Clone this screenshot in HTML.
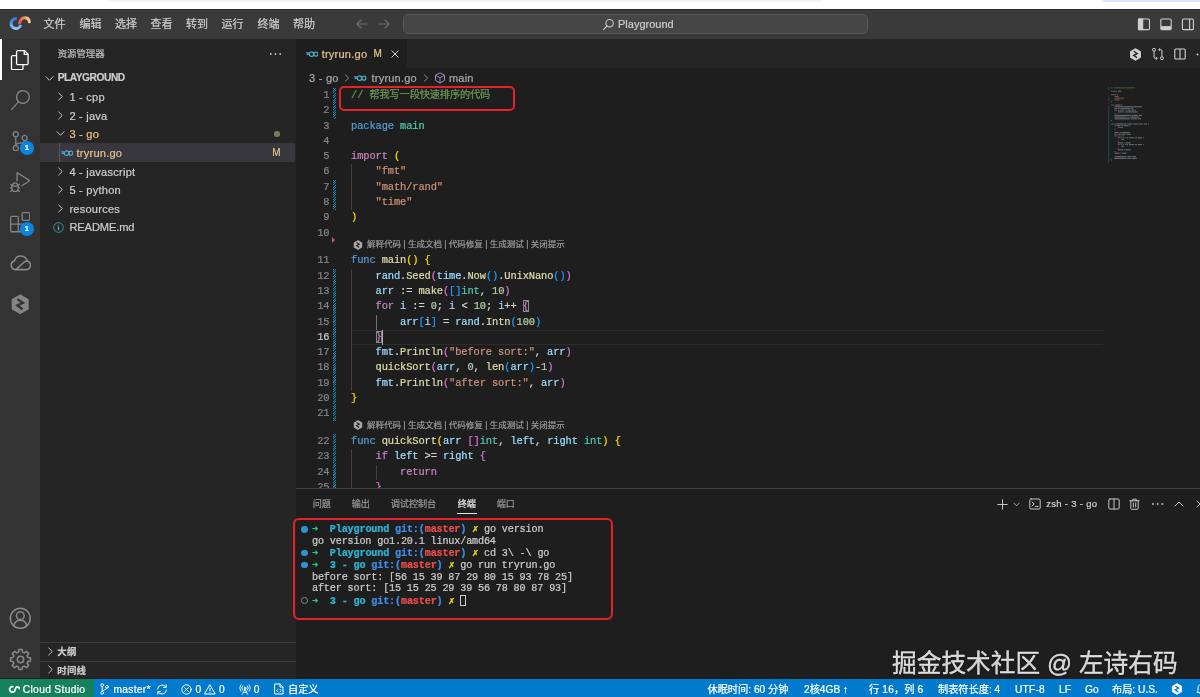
<!DOCTYPE html>
<html lang="zh-CN">
<head>
<meta charset="utf-8">
<title>Playground</title>
<style>
*{box-sizing:border-box;margin:0;padding:0}
html,body{width:1200px;height:697px;overflow:hidden;background:#1e1e1e}
body{position:relative;-webkit-text-stroke:0.22px;font-family:"Liberation Sans","Noto Sans CJK SC",sans-serif;font-size:11px;color:#cccccc;-webkit-font-smoothing:antialiased}
.abs{position:absolute}
body>div{will-change:transform}
#top{left:0;top:0;width:1200px;height:9px;background:#ffffff}
#top .g{left:108px;top:0;width:714px;height:2px;background:linear-gradient(#f1f1f1,#f8f8f8);border-radius:0 0 3px 3px}
#top .b{left:1102px;top:0;width:98px;height:2.4px;background:#dbe5fb;border-radius:0 0 0 3px}
#title{left:0;top:9px;width:1200px;height:30px;background:#3a3a3a;box-shadow:inset 0 1px 0 #2b2b2b}
#title .menu{top:0;height:30px;line-height:31.4px;margin-left:0.5px;font-size:11px;color:#cccccc;white-space:nowrap}
#cc{left:403px;top:5.2px;width:465px;height:20.3px;border:1px solid #5a5a5a;border-radius:5px;background:#464646}
#cc span{left:214px;top:0;line-height:18.6px;font-size:11px;color:#cccccc}
#act{left:0;top:39px;width:40px;height:639.3px;background:#333333}
#act .sel{left:0;top:0;width:2.3px;height:40.7px;background:#ffffff}
#side{z-index:1;left:40px;top:39px;width:256px;height:639.3px;background:#252526}
#side .hd{left:17.7px;top:0;height:29.7px;line-height:30px;font-size:9.4px;color:#bbbbbb}
.row{position:absolute;left:0.7px;width:254.3px;height:18.65px;line-height:18.65px;font-size:11.1px;letter-spacing:0.22px;color:#cccccc;white-space:nowrap}
.row .tx{position:absolute;top:0.6px}
.row svg{position:absolute}
.mod{color:#e2c08d}
#edit{left:295px;top:39px;width:905px;height:639.3px;background:#1e1e1e}
#tabs{left:0;top:0;width:905px;height:28.8px;background:#252526}
#tab1{left:0;top:0;width:111.7px;height:28.8px;background:#1e1e1e}
#bc{left:0;top:29.6px;width:905px;height:18.6px;line-height:18.6px;font-size:11px;color:#a9a9a9;white-space:nowrap}
#code{left:0;top:49.2px;width:905px;height:399.6px;overflow:hidden;font-family:"Liberation Mono","Noto Sans CJK SC",monospace;font-size:10.4px;letter-spacing:-0.11px}
.ln{position:absolute;left:0;width:34.5px;text-align:right;color:#858585;height:15.26px;line-height:15.26px}
.cl{position:absolute;left:56px;height:15.26px;line-height:15.26px;white-space:pre;color:#d4d4d4}
.lens{position:absolute;left:57px;margin-top:-2.4px;height:12.7px;line-height:12.7px;font-family:"Liberation Sans","Noto Sans CJK SC",sans-serif;font-size:8.5px;color:#999999;white-space:nowrap;letter-spacing:0}
.k{color:#569cd6}.c{color:#c586c0}.f{color:#dcdcaa}.v{color:#9cdcfe}.t{color:#4ec9b0}.s{color:#ce9178}.n{color:#b5cea8}.m{color:#6a9955}
.b1{color:#ffd700}.b2{color:#da70d6}.b3{color:#179fff}
.bm{outline:1px solid #888888;outline-offset:-1px;background:rgba(0,100,0,0.1)}
.gut{position:absolute;left:38px;width:3px;background:repeating-linear-gradient(135deg,#1b81a8 0,#1b81a8 0.8px,rgba(27,129,168,0.15) 0.8px,rgba(27,129,168,0.15) 1.7px)}
.ig{position:absolute;width:1px;background:#3a3a3a}
#panel{left:0;top:448.8px;width:905px;height:189.8px;background:#1e1e1e;border-top:1px solid #424242}
#panel .pt{top:5.4px;margin-left:0.7px;height:20px;line-height:20px;font-size:9.1px;color:#969696;white-space:nowrap}
#term{left:0;top:0.7px;font-family:"Liberation Mono",monospace;font-size:10.17px;letter-spacing:-0.166px;color:#cccccc;white-space:pre}
#term div{position:absolute;left:17px;height:11.87px;line-height:11.87px}
#term b{font-weight:bold}
.tg{color:#23d18b}.tc{color:#29b8db}.tb{color:#3b8eea}.tr{color:#f14c4c}.ty{color:#e5e510}
.dot{position:absolute;width:6.8px;height:6.8px;border-radius:50%;margin:-0.5px 0 0 0.7px}
.red{z-index:3;position:absolute;border:2px solid #e8202a;border-radius:5px}
#status{z-index:2;left:0;top:679px;width:1200px;height:18px;background:#007acc;color:#ffffff;font-size:10.2px;line-height:21.4px;white-space:nowrap}
#status .rm{left:0;top:0;width:93.8px;height:18px;background:#16825d}
#status span{position:absolute;top:0}
#status svg{margin-top:0.9px}
#wm{z-index:2;left:892.4px;top:648.8px;font-size:24.7px;line-height:30px;color:rgba(255,255,255,0.82);-webkit-text-stroke:0.3px;white-space:nowrap;text-shadow:0 0 2px rgba(0,0,0,0.35)}
</style>
</head>
<body>
<div id="top" class="abs"><div class="g abs"></div><div class="b abs"></div></div>

<div id="title" class="abs">
  <svg class="abs" style="left:8px;top:5.300px" width="24" height="17" viewBox="0 0 24 17" fill="none" stroke-width="3">
    <defs><linearGradient id="lgb" x1="0" y1="0" x2="0" y2="1"><stop offset="0" stop-color="#3677dc"/><stop offset="0.55" stop-color="#5f9ff0"/><stop offset="1" stop-color="#93c6f8"/></linearGradient>
    <linearGradient id="lgo" x1="0" y1="0" x2="1" y2="0"><stop offset="0" stop-color="#e25a4c"/><stop offset="0.45" stop-color="#ee8e62"/><stop offset="1" stop-color="#f8cf8e"/></linearGradient></defs>
    <path d="M8.85 4.67A4.9 4.9 0 1 0 12.73 10.77" stroke="url(#lgb)"/>
    <path d="M11.6 9C12.4 5.6 14 3.7 16.6 3.7C19.2 3.7 21 5.200 21.300 7.800" stroke="url(#lgo)" stroke-linecap="round"/>
  </svg>
  <span class="menu abs" style="left:43px">文件</span>
  <span class="menu abs" style="left:79px">编辑</span>
  <span class="menu abs" style="left:114.5px">选择</span>
  <span class="menu abs" style="left:150px">查看</span>
  <span class="menu abs" style="left:185.5px">转到</span>
  <span class="menu abs" style="left:221px">运行</span>
  <span class="menu abs" style="left:257px">终端</span>
  <span class="menu abs" style="left:292.5px">帮助</span>
  <svg class="abs" style="left:355px;top:9px" width="36" height="12" viewBox="0 0 36 12" fill="none" stroke="#6e6e6e" stroke-width="1.1" stroke-linecap="round" stroke-linejoin="round">
    <path d="M2 6H12M6 2L2 6L6 10"/><path d="M24 6H34M30 2L34 6L30 10"/>
  </svg>
  <div id="cc" class="abs">
    <svg class="abs" style="left:198px;top:2.800px" width="13" height="13" viewBox="0 0 13 13" fill="none" stroke="#cccccc" stroke-width="1.1" stroke-linecap="round"><circle cx="7.6" cy="5.2" r="3.7"/><path d="M5 8L1.4 11.6"/></svg>
    <span class="abs">Playground</span>
  </div>
  <svg class="abs" style="left:1137px;top:8.500px" width="62" height="13" viewBox="0 0 62 13" fill="none" stroke="#d0d0d0" stroke-width="1.100">
    <rect x="1.500" y="1" width="11" height="10.600" rx="1.200"/><rect x="1.500" y="1" width="4.200" height="10.600" fill="#d0d0d0"/>
    <rect x="23.800" y="1" width="10.400" height="10.600" rx="1.200"/><rect x="24.300" y="8.600" width="9.400" height="2.600" fill="#d0d0d0" stroke-width="0.800"/>
    <rect x="45.400" y="1" width="11" height="10.600" rx="1.200"/><path d="M52.600 1V11.600"/>
  </svg>
</div>

<div id="act" class="abs">
  <div class="sel abs"></div>
  <svg class="abs" style="left:10.1px;top:10.8px" width="20.4" height="20.4" viewBox="0 0 24 24" fill="#ffffff"><path d="M17.5 0h-9L7 1.5V6H2.5L1 7.5v15.07L2.5 24h12.07L16 22.57V18h4.7l1.3-1.43V4.5L17.5 0zm0 2.12l2.38 2.38H17.5V2.12zm-3 20.38h-12v-15H7v9.07L8.5 18h6v4.5zm6-6h-12v-15H16V6h4.5v10.5z"/></svg>
<svg class="abs" style="left:10.1px;top:51.3px" width="20.4" height="20.4" viewBox="0 0 24 24" fill="#858585"><path d="M15.25 0a8.25 8.25 0 0 0-6.18 13.72L1 22.88l1.12 1 8.05-9.12A8.251 8.251 0 1 0 15.25.01V0zm0 15a6.75 6.75 0 1 1 0-13.5 6.75 6.75 0 0 1 0 13.5z"/></svg>
<svg class="abs" style="left:10.1px;top:91.8px" width="20.4" height="20.4" viewBox="0 0 24 24" fill="#858585"><path d="M21.007 8.222A3.738 3.738 0 0 0 15.045 5.2a3.737 3.737 0 0 0 1.156 6.583 2.988 2.988 0 0 1-2.668 1.67h-2.99a4.456 4.456 0 0 0-2.989 1.165V7.4a3.737 3.737 0 1 0-1.494 0v9.117a3.776 3.776 0 1 0 1.816.099 2.99 2.99 0 0 1 2.668-1.667h2.99a4.484 4.484 0 0 0 4.223-3.039 3.736 3.736 0 0 0 3.25-3.687zM4.565 3.738a2.242 2.242 0 1 1 4.484 0 2.242 2.242 0 0 1-4.484 0zm4.484 16.441a2.242 2.242 0 1 1-4.484 0 2.242 2.242 0 0 1 4.484 0zm8.221-9.715a2.242 2.242 0 1 1 0-4.485 2.242 2.242 0 0 1 0 4.485z"/></svg>
<svg class="abs" style="left:10.1px;top:132.8px" width="20.4" height="20.4" viewBox="0 0 24 24" fill="#858585"><path d="M10.94 13.5l-1.32 1.32a3.73 3.73 0 0 0-7.24 0L1.06 13.5 0 14.56l1.72 1.72-.22.22V18H0v1.5h1.5v.08c.077.489.214.966.41 1.42L0 22.94 1.06 24l1.65-1.65A4.308 4.308 0 0 0 6 24a4.31 4.31 0 0 0 3.29-1.65L10.94 24 12 22.94 10.09 21c.198-.464.336-.951.41-1.45v-.1H12V18h-1.500v-1.5l-.22-.22L12 14.56l-1.06-1.06zM6 13.5a2.25 2.25 0 0 1 2.25 2.25h-4.5A2.25 2.25 0 0 1 6 13.5zm3 6a3.33 3.33 0 0 1-3 3 3.33 3.33 0 0 1-3-3v-2.250h6v2.250zm14.76-9.9v1.26L13.5 17.37V15.6l8.5-5.37L9 2v9.46a5.07 5.07 0 0 0-1.5-.72V.63L8.640 0l15.120 9.600z"/></svg>
<svg class="abs" style="left:10.1px;top:173.3px" width="20.4" height="20.4" viewBox="0 0 24 24" fill="#858585"><path d="M13.5 1.5L15 0h7.5L24 1.5V9l-1.5 1.5H15L13.5 9V1.5zm1.5 0V9h7.5V1.5H15zM0 15V6l1.5-1.5H9L10.5 6v7.5H18l1.5 1.5v7.5L18 24H1.5L0 22.500V15zm9-1.5V6H1.5v7.5H9zM9 15H1.5v7.5H9V15zm1.500 7.500H18V15h-7.500v7.500z"/></svg>
<svg class="abs" style="left:9.600px;top:213.300px" width="21.600" height="21.600" viewBox="0 0 24 24" fill="none"><g fill="none" stroke="#8a8a8a" stroke-width="1.700" stroke-linecap="round" stroke-linejoin="round"><path d="M6.300 19.600H17.800a4.900 4.900 0 0 0 1.300-9.620A7.300 7.300 0 0 0 5.050 9.700A5.050 5.050 0 0 0 6.300 19.600z"/><path d="M6.900 19.300L15.200 11.700C16.400 10.600 17.600 10.100 19 10"/></g></svg>
<svg class="abs" style="left:10.1px;top:255.3px" width="20.4" height="20.4" viewBox="0 0 24 24" fill="#858585"><path d="M12 1.2l9.2 5.3v11L12 22.800 2.800 17.500v-11z" stroke="#858585" stroke-width="1.6" stroke-linejoin="round"/><path d="M8.600 6L15.200 10.300L8.600 13.500L14.800 18" fill="none" stroke="#333333" stroke-width="2.700" stroke-linejoin="miter"/></svg>
<svg class="abs" style="left:9px;top:568.200px" width="22.600" height="22.600" viewBox="0 0 24 24" fill="none"><g fill="none" stroke="#8a8a8a" stroke-width="1.600"><circle cx="12" cy="12" r="10.6"/><circle cx="12" cy="9.200" r="4.100"/><path d="M5.200 19.800c.8-3.600 3.500-5.600 6.800-5.600s6 2 6.800 5.600"/></g></svg>
<svg class="abs" style="left:8.800px;top:608.500px" width="23" height="23" viewBox="0 0 24 24" fill="none"><g fill="none" stroke="#8a8a8a" stroke-width="1.600" stroke-linejoin="round"><path d="M19.73 9.95L22.36 10.28L22.36 13.72L19.73 14.05L18.92 16.02L20.54 18.10L18.10 20.54L16.02 18.92L14.05 19.73L13.72 22.36L10.28 22.36L9.95 19.73L7.98 18.92L5.90 20.54L3.46 18.10L5.08 16.02L4.27 14.05L1.64 13.72L1.64 10.28L4.27 9.95L5.08 7.98L3.46 5.90L5.90 3.46L7.98 5.08L9.95 4.27L10.28 1.64L13.72 1.64L14.05 4.27L16.02 5.08L18.10 3.46L20.54 5.90L18.92 7.98Z"/><circle cx="12" cy="12" r="3.300"/></g></svg>
<div class="abs" style="left:20.2px;top:102.2px;width:13.6px;height:13.6px;border-radius:50%;background:#0a84e0;color:#fff;font-size:7.6px;font-weight:bold;line-height:13.6px;text-align:center">1</div>
<div class="abs" style="left:20.2px;top:183.2px;width:13.6px;height:13.6px;border-radius:50%;background:#0a84e0;color:#fff;font-size:7.6px;font-weight:bold;line-height:13.6px;text-align:center">1</div>

</div>

<div id="side" class="abs">
  <div class="hd abs">资源管理器</div>
  <div class="row" style="top:29.70px"><svg style="left:4.300px;top:5.500px" width="9" height="9" viewBox="0 0 9 9" fill="none" stroke="#c5c5c5" stroke-width="1" stroke-linecap="round" stroke-linejoin="round"><path d="M1 2.700L4.500 6.300L8 2.700"/></svg><span class="tx" style="left:17px;top:0;font-weight:bold;font-size:10.200px;color:#cccccc;letter-spacing:-0.450px">PLAYGROUND</span></div>
<div class="row" style="top:48.35px;"><svg style="left:14.900px;top:4.800px" width="9" height="9" viewBox="0 0 9 9" fill="none" stroke="#c5c5c5" stroke-width="1" stroke-linecap="round" stroke-linejoin="round"><path d="M2.700 1L6.300 4.500L2.700 8"/></svg><span class="tx" style="left:28.7px">1 - cpp</span></div>
<div class="row" style="top:67.00px;"><svg style="left:14.900px;top:4.800px" width="9" height="9" viewBox="0 0 9 9" fill="none" stroke="#c5c5c5" stroke-width="1" stroke-linecap="round" stroke-linejoin="round"><path d="M2.700 1L6.300 4.500L2.700 8"/></svg><span class="tx" style="left:28.7px">2 - java</span></div>
<div class="row" style="top:85.65px;"><svg style="left:14.900px;top:4.800px" width="9" height="9" viewBox="0 0 9 9" fill="none" stroke="#c5c5c5" stroke-width="1" stroke-linecap="round" stroke-linejoin="round"><path d="M1 2.700L4.500 6.300L8 2.700"/></svg><span class="tx mod" style="left:28.7px">3 - go</span><span style="position:absolute;left:233.500px;top:6.600px;width:5.400px;height:5.400px;border-radius:50%;background:#7d7a57"></span></div>
<div class="row" style="top:104.30px;background:#37373d;box-shadow:-1px 0 0 #37373d"><svg style="left:20px;top:5.400px" width="12.500" height="7.800" viewBox="0 0 24 15" fill="none" stroke="#4fa8c8" stroke-width="2.400" stroke-linecap="round"><circle cx="10.500" cy="8" r="4.200"/><circle cx="19" cy="8" r="3.800"/><path d="M1 5.500H5M2.500 8.500H5"/></svg><span class="tx mod" style="left:35.8px">tryrun.go</span><span class="tx" style="left:231.600px;color:#e2c08d;font-size:10px;letter-spacing:0">M</span><span style="position:absolute;left:18.400px;top:0;width:1px;height:18.650px;background:#585858"></span></div>
<div class="row" style="top:122.95px;"><svg style="left:14.900px;top:4.800px" width="9" height="9" viewBox="0 0 9 9" fill="none" stroke="#c5c5c5" stroke-width="1" stroke-linecap="round" stroke-linejoin="round"><path d="M2.700 1L6.300 4.500L2.700 8"/></svg><span class="tx" style="left:28.7px">4 - javascript</span></div>
<div class="row" style="top:141.60px;"><svg style="left:14.900px;top:4.800px" width="9" height="9" viewBox="0 0 9 9" fill="none" stroke="#c5c5c5" stroke-width="1" stroke-linecap="round" stroke-linejoin="round"><path d="M2.700 1L6.300 4.500L2.700 8"/></svg><span class="tx" style="left:28.7px">5 - python</span></div>
<div class="row" style="top:160.25px;"><svg style="left:14.900px;top:4.800px" width="9" height="9" viewBox="0 0 9 9" fill="none" stroke="#c5c5c5" stroke-width="1" stroke-linecap="round" stroke-linejoin="round"><path d="M2.700 1L6.300 4.500L2.700 8"/></svg><span class="tx" style="left:28.7px">resources</span></div>
<div class="row" style="top:178.90px;"><svg style="left:12.500px;top:4px" width="11" height="11" viewBox="0 0 11 11"><circle cx="5.500" cy="5.500" r="4.800" fill="none" stroke="#3794a8" stroke-width="1"/><path d="M5.500 4.600V8.200M5.500 2.700V3.500" stroke="#4bb2c8" stroke-width="1.300"/></svg><span class="tx" style="left:28.7px;letter-spacing:-0.100px">README.md</span></div>
<svg class="abs" style="left:229.300px;top:13px" width="13" height="4" viewBox="0 0 13 4" fill="#c5c5c5"><circle cx="1.800" cy="2" r="0.900"/><circle cx="6.500" cy="2" r="0.900"/><circle cx="11.200" cy="2" r="0.900"/></svg>
<div class="row" style="top:602.600px;left:0;width:256px;border-top:1px solid #3c3c3c;height:19.400px;line-height:17.600px"><svg style="left:5.500px;top:4.200px" width="9" height="9" viewBox="0 0 9 9" fill="none" stroke="#c5c5c5" stroke-width="1" stroke-linecap="round" stroke-linejoin="round"><path d="M2.700 1L6.300 4.500L2.700 8"/></svg><span class="tx" style="left:17.300px;top:0;font-weight:bold;font-size:9.400px">大纲</span></div>
<div class="row" style="top:622px;left:0;width:256px;border-top:1px solid #3c3c3c;height:17.300px;line-height:17.960px"><svg style="left:5.500px;top:3.450px" width="9" height="9" viewBox="0 0 9 9" fill="none" stroke="#c5c5c5" stroke-width="1" stroke-linecap="round" stroke-linejoin="round"><path d="M2.700 1L6.300 4.500L2.700 8"/></svg><span class="tx" style="left:17.300px;top:0;font-weight:bold;font-size:9.400px">时间线</span></div>

</div>

<div id="edit" class="abs">
  <div id="tabs" class="abs">
    <div id="tab1" class="abs"></div>
    <svg class="abs" style="left:10.5px;top:11.0px" width="12.5" height="7.8" viewBox="0 0 24 15" fill="none" stroke="#4fa8c8" stroke-width="2.400" stroke-linecap="round"><circle cx="10.500" cy="8" r="4.200"/><circle cx="19" cy="8" r="3.800"/><path d="M1 5.500H5M2.500 8.500H5"/></svg><span class="abs" style="left:26.700px;top:0;line-height:30.500px;font-size:11.100px;letter-spacing:0.200px;color:#e2c08d;white-space:nowrap">tryrun.go</span><span class="abs" style="left:78.600px;top:0;line-height:30.500px;font-size:10px;color:#e2c08d">M</span><svg class="abs" style="left:95.500px;top:11px" width="8" height="8" viewBox="0 0 8 8" stroke="#d0d0d0" stroke-width="1" stroke-linecap="round"><path d="M0.800 0.800L7.200 7.200M7.200 0.800L0.800 7.200"/></svg><svg class="abs" style="left:833.500px;top:8.500px" width="13" height="13" viewBox="0 0 24 24"><path d="M12 1.200l9.200 5.300v11L12 22.800 2.800 17.500v-11z" fill="#d4d4d4" stroke="#d4d4d4" stroke-width="1.600" stroke-linejoin="round"/><path d="M8.600 6L15.200 10.300L8.600 13.500L14.800 18" fill="none" stroke="#252526" stroke-width="2.700" stroke-linejoin="miter"/></svg><svg class="abs" style="left:856px;top:8px" width="14" height="14" viewBox="0 0 16 16" fill="none" stroke="#d4d4d4" stroke-width="1.100"><circle cx="3.500" cy="3.200" r="1.700"/><circle cx="12.500" cy="12.800" r="1.700"/><path d="M3.500 5V11.500a1.500 1.500 0 0 0 1.500 1.500H7M5.500 11.500L7.200 13L5.500 14.500M12.500 11V4.500a1.500 1.500 0 0 0-1.500-1.500H9M10.500 1.500L8.800 3L10.500 4.500"/></svg><svg class="abs" style="left:879px;top:8.500px" width="12" height="12" viewBox="0 0 12 12" fill="none" stroke="#d4d4d4" stroke-width="1.100"><rect x="0.800" y="1" width="10.400" height="10" rx="1"/><path d="M6 1V11"/></svg><svg class="abs" style="left:901px;top:13.500px" width="4" height="3" viewBox="0 0 4 3" fill="#d4d4d4"><circle cx="1.500" cy="1.500" r="0.900"/></svg>
  </div>
  <div id="bc" class="abs"><span class="abs" style="left:14px;letter-spacing:0.250px">3 - go</span><svg class="abs" style="left:47.5px;top:5.300px" width="8" height="8" viewBox="0 0 9 9" fill="none" stroke="#a0a0a0" stroke-width="1" stroke-linecap="round" stroke-linejoin="round"><path d="M2.700 1L6.300 4.500L2.700 8"/></svg><svg class="abs" style="left:59.0px;top:5.6px" width="12.5" height="7.8" viewBox="0 0 24 15" fill="none" stroke="#4fa8c8" stroke-width="2.400" stroke-linecap="round"><circle cx="10.500" cy="8" r="4.200"/><circle cx="19" cy="8" r="3.800"/><path d="M1 5.500H5M2.500 8.500H5"/></svg><span class="abs" style="left:76.600px;letter-spacing:0.200px">tryrun.go</span><svg class="abs" style="left:127.0px;top:5.300px" width="8" height="8" viewBox="0 0 9 9" fill="none" stroke="#a0a0a0" stroke-width="1" stroke-linecap="round" stroke-linejoin="round"><path d="M2.700 1L6.300 4.500L2.700 8"/></svg><svg class="abs" style="left:138.500px;top:3.300px" width="12" height="12" viewBox="0 0 16 16" fill="none" stroke="#b8a0d8" stroke-width="1.100" stroke-linejoin="round"><path d="M8 1.200L14 4.300V11.200L8 14.800L2 11.200V4.300Z"/><path d="M2 4.300L8 7.600L14 4.300M8 7.600V14.800"/></svg><span class="abs" style="left:154px;letter-spacing:0.200px">main</span></div>
  <div id="code" class="abs"><div class="abs" style="left:56px;top:241.60px;width:752px;height:15.26px;border-top:1px solid #2c2c2c;border-bottom:1px solid #2c2c2c"></div>
<div class="gut" style="top:0.00px;height:30.52px"></div>
<div class="gut" style="top:91.56px;height:30.52px"></div>
<div class="gut" style="top:180.56px;height:152.60px"></div>
<div class="gut" style="top:345.86px;height:61.04px"></div>
<div class="ig" style="left:56.0px;top:76.30px;height:45.78px;background:#404040"></div>
<div class="ig" style="left:56.0px;top:180.56px;height:122.08px;background:#404040"></div>
<div class="ig" style="left:80.5px;top:226.34px;height:15.26px;background:#707070"></div>
<div class="ig" style="left:56.0px;top:361.12px;height:45.78px;background:#404040"></div>
<div class="ig" style="left:80.5px;top:376.38px;height:15.26px;background:#404040"></div>
<div class="ln" style="top:0.00px">1</div><div class="cl" style="top:0.00px"><span class="m">// </span><span class="m" style="font-size:10.180px">帮我写一段快速排序的代码</span></div>
<div class="ln" style="top:15.26px">2</div><div class="cl" style="top:15.26px"></div>
<div class="ln" style="top:30.52px">3</div><div class="cl" style="top:30.52px"><span class="k">package</span> <span class="t">main</span></div>
<div class="ln" style="top:45.78px">4</div><div class="cl" style="top:45.78px"></div>
<div class="ln" style="top:61.04px">5</div><div class="cl" style="top:61.04px"><span class="c">import</span> <span class="b1">(</span></div>
<div class="ln" style="top:76.30px">6</div><div class="cl" style="top:76.30px">    <span class="s">"fmt"</span></div>
<div class="ln" style="top:91.56px">7</div><div class="cl" style="top:91.56px">    <span class="s">"math/rand"</span></div>
<div class="ln" style="top:106.82px">8</div><div class="cl" style="top:106.82px">    <span class="s">"time"</span></div>
<div class="ln" style="top:122.08px">9</div><div class="cl" style="top:122.08px"><span class="b1">)</span></div>
<div class="ln" style="top:137.34px">10</div><div class="cl" style="top:137.34px"></div>
<div class="ln" style="top:165.30px">11</div><div class="cl" style="top:165.30px"><span class="k">func</span> <span class="f">main</span><span class="b1">()</span> <span class="b1">{</span></div>
<div class="ln" style="top:180.56px">12</div><div class="cl" style="top:180.56px">    <span class="v">rand</span>.<span class="f">Seed</span><span class="b2">(</span><span class="v">time</span>.<span class="f">Now</span><span class="b3">()</span>.<span class="f">UnixNano</span><span class="b3">()</span><span class="b2">)</span></div>
<div class="ln" style="top:195.82px">13</div><div class="cl" style="top:195.82px">    <span class="v">arr</span> := <span class="f">make</span><span class="b2">(</span><span class="b3">[]</span><span class="t">int</span>, <span class="n">10</span><span class="b2">)</span></div>
<div class="ln" style="top:211.08px">14</div><div class="cl" style="top:211.08px">    <span class="c">for</span> <span class="v">i</span> := <span class="n">0</span>; <span class="v">i</span> &lt; <span class="n">10</span>; <span class="v">i</span>++ <span class="b2 bm">{</span></div>
<div class="ln" style="top:226.34px">15</div><div class="cl" style="top:226.34px">        <span class="v">arr</span><span class="b3">[</span><span class="v">i</span><span class="b3">]</span> = <span class="v">rand</span>.<span class="f">Intn</span><span class="b3">(</span><span class="n">100</span><span class="b3">)</span></div>
<div class="ln" style="top:241.60px;color:#c6c6c6">16</div><div class="cl" style="top:241.60px">    <span class="b2 bm">}</span></div>
<div class="ln" style="top:256.86px">17</div><div class="cl" style="top:256.86px">    <span class="v">fmt</span>.<span class="f">Println</span><span class="b2">(</span><span class="s">"before sort:"</span>, <span class="v">arr</span><span class="b2">)</span></div>
<div class="ln" style="top:272.12px">18</div><div class="cl" style="top:272.12px">    <span class="f">quickSort</span><span class="b2">(</span><span class="v">arr</span>, <span class="n">0</span>, <span class="f">len</span><span class="b3">(</span><span class="v">arr</span><span class="b3">)</span>-<span class="n">1</span><span class="b2">)</span></div>
<div class="ln" style="top:287.38px">19</div><div class="cl" style="top:287.38px">    <span class="v">fmt</span>.<span class="f">Println</span><span class="b2">(</span><span class="s">"after sort:"</span>, <span class="v">arr</span><span class="b2">)</span></div>
<div class="ln" style="top:302.64px">20</div><div class="cl" style="top:302.64px"><span class="b1">}</span></div>
<div class="ln" style="top:317.90px">21</div><div class="cl" style="top:317.90px"></div>
<div class="ln" style="top:345.86px">22</div><div class="cl" style="top:345.86px"><span class="k">func</span> <span class="f">quickSort</span><span class="b1">(</span><span class="v">arr</span> <span class="b2">[]</span><span class="t">int</span>, <span class="v">left</span>, <span class="v">right</span> <span class="t">int</span><span class="b1">)</span> <span class="b1">{</span></div>
<div class="ln" style="top:361.12px">23</div><div class="cl" style="top:361.12px">    <span class="c">if</span> <span class="v">left</span> &gt;= <span class="v">right</span> <span class="b2">{</span></div>
<div class="ln" style="top:376.38px">24</div><div class="cl" style="top:376.38px">        <span class="c">return</span></div>
<div class="ln" style="top:391.64px">25</div><div class="cl" style="top:391.64px">    <span class="b2">}</span></div>
<div class="lens" style="top:152.60px"><svg style="position:absolute;left:0.800px;top:1.200px" width="10" height="10" viewBox="0 0 24 24"><path d="M12 1.200l9.200 5.300v11L12 22.800 2.800 17.500v-11z" fill="#b0b0b0" stroke="#b0b0b0" stroke-width="1.600" stroke-linejoin="round"/><path d="M8.600 6L15.200 10.300L8.600 13.500L14.800 18" fill="none" stroke="#1e1e1e" stroke-width="2.700" stroke-linejoin="miter"/></svg><span style="position:absolute;left:15px;top:0">解释代码 | 生成文档 | 代码修复 | 生成测试 | 关闭提示</span></div>
<div class="lens" style="top:333.16px"><svg style="position:absolute;left:0.800px;top:1.200px" width="10" height="10" viewBox="0 0 24 24"><path d="M12 1.200l9.200 5.300v11L12 22.800 2.800 17.500v-11z" fill="#b0b0b0" stroke="#b0b0b0" stroke-width="1.600" stroke-linejoin="round"/><path d="M8.600 6L15.200 10.300L8.600 13.500L14.800 18" fill="none" stroke="#1e1e1e" stroke-width="2.700" stroke-linejoin="miter"/></svg><span style="position:absolute;left:15px;top:0">解释代码 | 生成文档 | 代码修复 | 生成测试 | 关闭提示</span></div>
<div class="abs" style="left:36.500px;top:149.54px;width:0;height:0;margin:-1px 0 0 0.700px;border-left:3.800px solid #e0505a;border-top:3.500px solid transparent;border-bottom:3.500px solid transparent"></div>
<div class="abs" style="left:86.600px;top:242.10px;width:1.200px;height:14.26px;background:#aeafad"></div>
</div>
  <svg class="abs" style="left:813px;top:48px" width="60" height="80" viewBox="0 0 60 80" opacity="0.450"><rect x="3.00" y="0.30" width="1.72" height="1.100" fill="#6a9955"/><rect x="5.58" y="0.30" width="21.50" height="1.100" fill="#6a9955"/><rect x="3.00" y="3.74" width="6.02" height="1.100" fill="#569cd6"/><rect x="9.88" y="3.74" width="3.44" height="1.100" fill="#b8c4cc"/><rect x="3.00" y="7.18" width="5.16" height="1.100" fill="#c586c0"/><rect x="9.02" y="7.18" width="0.86" height="1.100" fill="#b8c4cc"/><rect x="6.44" y="8.90" width="4.30" height="1.100" fill="#ce9178"/><rect x="6.44" y="10.62" width="9.46" height="1.100" fill="#ce9178"/><rect x="6.44" y="12.34" width="5.16" height="1.100" fill="#ce9178"/><rect x="3.00" y="14.06" width="0.86" height="1.100" fill="#b8c4cc"/><rect x="3.00" y="17.50" width="3.44" height="1.100" fill="#569cd6"/><rect x="7.30" y="17.50" width="5.16" height="1.100" fill="#b8c4cc"/><rect x="13.32" y="17.50" width="0.86" height="1.100" fill="#b8c4cc"/><rect x="6.44" y="19.22" width="27.52" height="1.100" fill="#b8c4cc"/><rect x="6.44" y="20.94" width="2.58" height="1.100" fill="#b8c4cc"/><rect x="9.88" y="20.94" width="1.72" height="1.100" fill="#b8c4cc"/><rect x="12.46" y="20.94" width="9.46" height="1.100" fill="#b8c4cc"/><rect x="22.78" y="20.94" width="2.58" height="1.100" fill="#b8c4cc"/><rect x="6.44" y="22.66" width="2.58" height="1.100" fill="#c586c0"/><rect x="9.88" y="22.66" width="0.86" height="1.100" fill="#b8c4cc"/><rect x="11.60" y="22.66" width="1.72" height="1.100" fill="#b8c4cc"/><rect x="14.18" y="22.66" width="1.72" height="1.100" fill="#b8c4cc"/><rect x="16.76" y="22.66" width="0.86" height="1.100" fill="#b8c4cc"/><rect x="18.48" y="22.66" width="0.86" height="1.100" fill="#b8c4cc"/><rect x="20.20" y="22.66" width="2.58" height="1.100" fill="#b8c4cc"/><rect x="23.64" y="22.66" width="2.58" height="1.100" fill="#b8c4cc"/><rect x="27.08" y="22.66" width="0.86" height="1.100" fill="#b8c4cc"/><rect x="9.88" y="24.38" width="5.16" height="1.100" fill="#b8c4cc"/><rect x="15.90" y="24.38" width="0.86" height="1.100" fill="#b8c4cc"/><rect x="17.62" y="24.38" width="12.04" height="1.100" fill="#b8c4cc"/><rect x="6.44" y="26.10" width="0.86" height="1.100" fill="#b8c4cc"/><rect x="6.44" y="27.82" width="16.34" height="1.100" fill="#b8c4cc"/><rect x="23.64" y="27.82" width="6.02" height="1.100" fill="#b8c4cc"/><rect x="30.52" y="27.82" width="3.44" height="1.100" fill="#b8c4cc"/><rect x="6.44" y="29.54" width="12.04" height="1.100" fill="#b8c4cc"/><rect x="19.34" y="29.54" width="1.72" height="1.100" fill="#b8c4cc"/><rect x="21.92" y="29.54" width="9.46" height="1.100" fill="#b8c4cc"/><rect x="6.44" y="31.26" width="15.48" height="1.100" fill="#b8c4cc"/><rect x="22.78" y="31.26" width="6.02" height="1.100" fill="#b8c4cc"/><rect x="29.66" y="31.26" width="3.44" height="1.100" fill="#b8c4cc"/><rect x="3.00" y="32.98" width="0.86" height="1.100" fill="#b8c4cc"/><rect x="3.00" y="36.42" width="3.44" height="1.100" fill="#569cd6"/><rect x="7.30" y="36.42" width="11.18" height="1.100" fill="#b8c4cc"/><rect x="19.34" y="36.42" width="5.16" height="1.100" fill="#b8c4cc"/><rect x="25.36" y="36.42" width="4.30" height="1.100" fill="#b8c4cc"/><rect x="30.52" y="36.42" width="4.30" height="1.100" fill="#b8c4cc"/><rect x="35.68" y="36.42" width="3.44" height="1.100" fill="#b8c4cc"/><rect x="39.98" y="36.42" width="0.86" height="1.100" fill="#b8c4cc"/><rect x="6.44" y="38.14" width="1.72" height="1.100" fill="#c586c0"/><rect x="9.02" y="38.14" width="3.44" height="1.100" fill="#b8c4cc"/><rect x="13.32" y="38.14" width="1.72" height="1.100" fill="#b8c4cc"/><rect x="15.90" y="38.14" width="4.30" height="1.100" fill="#b8c4cc"/><rect x="21.06" y="38.14" width="0.86" height="1.100" fill="#b8c4cc"/><rect x="9.88" y="39.86" width="5.16" height="1.100" fill="#c586c0"/><rect x="6.44" y="41.58" width="0.86" height="1.100" fill="#b8c4cc"/><rect x="6.44" y="45.02" width="4.30" height="1.100" fill="#b8c4cc"/><rect x="11.60" y="45.02" width="1.72" height="1.100" fill="#b8c4cc"/><rect x="14.18" y="45.02" width="7.74" height="1.100" fill="#b8c4cc"/><rect x="6.44" y="46.74" width="1.72" height="1.100" fill="#b8c4cc"/><rect x="9.02" y="46.74" width="0.86" height="1.100" fill="#b8c4cc"/><rect x="10.74" y="46.74" width="1.72" height="1.100" fill="#b8c4cc"/><rect x="13.32" y="46.74" width="4.30" height="1.100" fill="#b8c4cc"/><rect x="18.48" y="46.74" width="4.30" height="1.100" fill="#b8c4cc"/><rect x="6.44" y="48.46" width="2.58" height="1.100" fill="#c586c0"/><rect x="9.88" y="48.46" width="0.86" height="1.100" fill="#b8c4cc"/><rect x="11.60" y="48.46" width="0.86" height="1.100" fill="#b8c4cc"/><rect x="13.32" y="48.46" width="0.86" height="1.100" fill="#b8c4cc"/><rect x="15.04" y="48.46" width="0.86" height="1.100" fill="#b8c4cc"/><rect x="9.88" y="50.18" width="2.58" height="1.100" fill="#c586c0"/><rect x="13.32" y="50.18" width="0.86" height="1.100" fill="#b8c4cc"/><rect x="15.04" y="50.18" width="0.86" height="1.100" fill="#b8c4cc"/><rect x="16.76" y="50.18" width="0.86" height="1.100" fill="#b8c4cc"/><rect x="18.48" y="50.18" width="1.72" height="1.100" fill="#b8c4cc"/><rect x="21.06" y="50.18" width="5.16" height="1.100" fill="#b8c4cc"/><rect x="27.08" y="50.18" width="1.72" height="1.100" fill="#b8c4cc"/><rect x="29.66" y="50.18" width="4.30" height="1.100" fill="#b8c4cc"/><rect x="34.82" y="50.18" width="0.86" height="1.100" fill="#b8c4cc"/><rect x="13.32" y="51.90" width="2.58" height="1.100" fill="#b8c4cc"/><rect x="9.88" y="53.62" width="0.86" height="1.100" fill="#b8c4cc"/><rect x="9.88" y="55.34" width="5.16" height="1.100" fill="#b8c4cc"/><rect x="15.90" y="55.34" width="0.86" height="1.100" fill="#b8c4cc"/><rect x="17.62" y="55.34" width="5.16" height="1.100" fill="#b8c4cc"/><rect x="9.88" y="57.06" width="2.58" height="1.100" fill="#c586c0"/><rect x="13.32" y="57.06" width="0.86" height="1.100" fill="#b8c4cc"/><rect x="15.04" y="57.06" width="0.86" height="1.100" fill="#b8c4cc"/><rect x="16.76" y="57.06" width="0.86" height="1.100" fill="#b8c4cc"/><rect x="18.48" y="57.06" width="1.72" height="1.100" fill="#b8c4cc"/><rect x="21.06" y="57.06" width="5.16" height="1.100" fill="#b8c4cc"/><rect x="27.08" y="57.06" width="1.72" height="1.100" fill="#b8c4cc"/><rect x="29.66" y="57.06" width="4.30" height="1.100" fill="#b8c4cc"/><rect x="34.82" y="57.06" width="0.86" height="1.100" fill="#b8c4cc"/><rect x="13.32" y="58.78" width="2.58" height="1.100" fill="#b8c4cc"/><rect x="9.88" y="60.50" width="0.86" height="1.100" fill="#b8c4cc"/><rect x="9.88" y="62.22" width="5.16" height="1.100" fill="#b8c4cc"/><rect x="15.90" y="62.22" width="0.86" height="1.100" fill="#b8c4cc"/><rect x="17.62" y="62.22" width="5.16" height="1.100" fill="#b8c4cc"/><rect x="6.44" y="63.94" width="0.86" height="1.100" fill="#b8c4cc"/><rect x="6.44" y="65.66" width="5.16" height="1.100" fill="#b8c4cc"/><rect x="12.46" y="65.66" width="0.86" height="1.100" fill="#b8c4cc"/><rect x="14.18" y="65.66" width="4.30" height="1.100" fill="#b8c4cc"/><rect x="6.44" y="69.10" width="12.04" height="1.100" fill="#b8c4cc"/><rect x="19.34" y="69.10" width="4.30" height="1.100" fill="#b8c4cc"/><rect x="24.50" y="69.10" width="3.44" height="1.100" fill="#b8c4cc"/><rect x="6.44" y="70.82" width="12.04" height="1.100" fill="#b8c4cc"/><rect x="19.34" y="70.82" width="3.44" height="1.100" fill="#b8c4cc"/><rect x="23.64" y="70.82" width="5.16" height="1.100" fill="#b8c4cc"/><rect x="3.00" y="72.54" width="0.86" height="1.100" fill="#b8c4cc"/><rect x="0.300" y="0.00" width="1" height="3.44" fill="#1b81a8"/><rect x="0.300" y="10.32" width="1" height="3.44" fill="#1b81a8"/><rect x="0.300" y="18.92" width="1" height="17.20" fill="#1b81a8"/><rect x="0.300" y="36.12" width="1" height="39.56" fill="#1b81a8"/><rect x="0.300" y="15.98" width="1" height="1.200" fill="#c04050"/></svg>
  <div id="panel" class="abs"><span class="pt abs" style="left:17.0px">问题</span><span class="pt abs" style="left:56.0px">输出</span><span class="pt abs" style="left:95.0px">调试控制台</span><span class="pt abs" style="left:162.0px;color:#e7e7e7">终端</span><span class="pt abs" style="left:201.0px">端口</span><div class="abs" style="left:162px;top:24px;width:20px;height:1px;background:#e7e7e7"></div>
<svg class="abs" style="left:701.5px;top:10.0px" width="11" height="11" viewBox="0 0 11 11" fill="none" stroke="#c5c5c5" stroke-width="1" stroke-linecap="round" stroke-linejoin="round"><path d="M5.500 0.800V10.200M0.800 5.500H10.200"/></svg><svg class="abs" style="left:717.5px;top:13.0px" width="7" height="5" viewBox="0 0 7 5" fill="none" stroke="#a0a0a0" stroke-width="1" stroke-linecap="round" stroke-linejoin="round"><path d="M0.800 1L3.500 3.800L6.200 1"/></svg><svg class="abs" style="left:734.3px;top:9.5px" width="12" height="12" viewBox="0 0 12 12" fill="none" stroke="#c5c5c5" stroke-width="1" stroke-linecap="round" stroke-linejoin="round"><rect x="0.800" y="1" width="10.400" height="10" rx="1.200"/><path d="M3 4L5.200 6L3 8M6.500 8.500H9"/></svg><span class="abs" style="left:751.200px;top:5px;line-height:20px;font-size:9.500px;color:#cccccc;letter-spacing:0.300px;white-space:nowrap">zsh - 3 - go</span><svg class="abs" style="left:813px;top:9.5px" width="12" height="12" viewBox="0 0 12 12" fill="none" stroke="#c5c5c5" stroke-width="1" stroke-linecap="round" stroke-linejoin="round"><rect x="0.800" y="1" width="10.400" height="10" rx="1"/><path d="M6 1V11"/></svg><svg class="abs" style="left:834.2px;top:9.5px" width="11" height="12" viewBox="0 0 11 12" fill="none" stroke="#c5c5c5" stroke-width="1" stroke-linecap="round" stroke-linejoin="round"><path d="M0.800 2.800H10.200M3.800 2.800V1.200H7.200V2.800M1.800 2.800V10.500a0.800 0.800 0 0 0 0.800 0.800H8.400a0.800 0.800 0 0 0 0.800-0.800V2.800M4.300 5V9M6.700 5V9"/></svg><svg class="abs" style="left:855.7px;top:13.5px" width="13" height="4" viewBox="0 0 13 4" fill="none" stroke="#c5c5c5" stroke-width="0.5" stroke-linecap="round" stroke-linejoin="round"><circle cx="1.800" cy="2" r="0.700" fill="#c5c5c5"/><circle cx="6.500" cy="2" r="0.700" fill="#c5c5c5"/><circle cx="11.200" cy="2" r="0.700" fill="#c5c5c5"/></svg><svg class="abs" style="left:879.3px;top:12.5px" width="10" height="6" viewBox="0 0 10 6" fill="none" stroke="#c5c5c5" stroke-width="1" stroke-linecap="round" stroke-linejoin="round"><path d="M1 5L5 1L9 5"/></svg><svg class="abs" style="left:901.0px;top:11.5px" width="8" height="8" viewBox="0 0 8 8" fill="none" stroke="#c5c5c5" stroke-width="1" stroke-linecap="round" stroke-linejoin="round"><path d="M0.800 0.800L7.200 7.200M7.200 0.800L0.800 7.200"/></svg><div id="term" class="abs"><div style="top:34.60px"><b class="tg">➜</b>  <b class="tc">Playground</b> <b class="tb">git:(</b><b class="tr">master</b><b class="tb">)</b> <b class="ty">✗</b> go version</div><div style="top:46.47px">go version go1.20.1 linux/amd64</div><div style="top:58.34px"><b class="tg">➜</b>  <b class="tc">Playground</b> <b class="tb">git:(</b><b class="tr">master</b><b class="tb">)</b> <b class="ty">✗</b> cd 3\ -\ go</div><div style="top:70.21px"><b class="tg">➜</b>  <b class="tc">3 - go</b> <b class="tb">git:(</b><b class="tr">master</b><b class="tb">)</b> <b class="ty">✗</b> go run tryrun.go</div><div style="top:82.08px">before sort: [56 15 39 87 29 80 15 93 78 25]</div><div style="top:93.95px">after sort: [15 15 25 29 39 56 78 80 87 93]</div><div style="top:105.82px"><b class="tg">➜</b>  <b class="tc">3 - go</b> <b class="tb">git:(</b><b class="tr">master</b><b class="tb">)</b> <b class="ty">✗</b> <span style="display:inline-block;width:5.900px;height:10.500px;border:1px solid #cccccc;vertical-align:-2px"></span></div></div>
<span class="dot" style="left:5.300px;top:37.60px;background:#2b93d6"></span><span class="dot" style="left:5.300px;top:61.34px;background:#2b93d6"></span><span class="dot" style="left:5.300px;top:73.21px;background:#2b93d6"></span><span class="dot" style="left:5.300px;top:108.82px;border:1px solid #8a8a8a"></span></div>
</div>

<div class="red" style="left:339.300px;top:86px;width:176px;height:24.800px;border-width:2.500px"></div>
<div class="red" style="left:293.300px;top:518.300px;width:320px;height:101.500px;border-radius:6px;border-width:2.500px"></div>
<div id="status" class="abs"><div class="rm abs"></div><svg class="abs" style="left:8px;top:5.600px" width="12.400" height="8.300" viewBox="0 0 12 8" fill="none" stroke="#ffffff" stroke-width="1" stroke-linecap="round" stroke-linejoin="round"><path d="M4.600 1.600A2.700 2.700 0 1 0 6.200 6.200C7.200 5 6.800 1.900 9 1.800C10.300 1.800 10.900 2.600 11 3.500" stroke-width="1.700"/></svg><span style="left:22.800px;letter-spacing:0.300px;font-size:10.300px">Cloud Studio</span><svg class="abs" style="left:99.5px;top:3.6px" width="9" height="12" viewBox="0 0 9 12" fill="none" stroke="#ffffff" stroke-width="1" stroke-linecap="round" stroke-linejoin="round"><circle cx="2.200" cy="2.200" r="1.400"/><circle cx="2.200" cy="9.800" r="1.400"/><circle cx="7" cy="3.800" r="1.400"/><path d="M2.200 3.600V8.400M7 5.200C7 7.200 2.200 6.400 2.200 8.400"/></svg><span style="left:113.500px;letter-spacing:0.300px">master*</span><svg class="abs" style="left:155.5px;top:4.1px" width="12" height="11" viewBox="0 0 12 11" fill="none" stroke="#ffffff" stroke-width="1" stroke-linecap="round" stroke-linejoin="round"><path d="M1.500 5A4.600 4.600 0 0 1 10 3.200M10.500 6A4.600 4.600 0 0 1 2 7.800M10.200 0.800V3.400H7.600M1.800 10.200V7.600H4.400"/></svg><svg class="abs" style="left:180.5px;top:4.1px" width="11" height="11" viewBox="0 0 11 11" fill="none" stroke="#ffffff" stroke-width="1" stroke-linecap="round" stroke-linejoin="round"><circle cx="5.500" cy="5.500" r="4.700"/><path d="M3.700 3.700L7.300 7.300M7.300 3.700L3.700 7.300"/></svg><span style="left:195.500px;">0</span><svg class="abs" style="left:204.0px;top:4.1px" width="12" height="11" viewBox="0 0 12 11" fill="none" stroke="#ffffff" stroke-width="1" stroke-linecap="round" stroke-linejoin="round"><path d="M6 1L11.200 10H0.800Z"/><path d="M6 4.200V6.800M6 8.200V8.400"/></svg><span style="left:219px;">0</span><svg class="abs" style="left:238.5px;top:4.1px" width="12" height="11" viewBox="0 0 12 11" fill="none" stroke="#ffffff" stroke-width="0.9" stroke-linecap="round" stroke-linejoin="round"><path d="M6 5L3.400 10.300M6 5L8.600 10.300M4.400 8.300H7.600"/><circle cx="6" cy="4" r="0.900"/><path d="M3.600 1.800A3.300 3.300 0 0 0 3.600 6.200M8.400 1.800A3.300 3.300 0 0 1 8.400 6.200M1.800 0.800A5.300 5.300 0 0 0 1.800 7.200M10.200 0.800A5.300 5.300 0 0 1 10.200 7.200"/></svg><span style="left:253.800px;">0</span><svg class="abs" style="left:274.0px;top:3.6px" width="10" height="12" viewBox="0 0 10 12" fill="none" stroke="#ffffff" stroke-width="1" stroke-linecap="round" stroke-linejoin="round"><path d="M1 1H6L9 4V11H1Z"/><path d="M6 1V4H9"/><path d="M4 6.200L2.800 7.600L4 9M6 6.200L7.200 7.600L6 9" stroke-width="0.800"/></svg><span style="left:288.0px;">自定义</span><span style="left:707.500px;">休眠时间: 60 分钟</span><span style="left:804px;">2核4GB ↑</span><span style="left:869px;letter-spacing:0.150px">行 16，列 6</span><span style="left:938.0px;">制表符长度: 4</span><span style="left:1015.0px;letter-spacing:0.200px">UTF-8</span><span style="left:1059.0px;">LF</span><span style="left:1085.0px;">Go</span><span style="left:1112.0px;">布局: U.S.</span><svg class="abs" style="left:1171px;top:3.500px" width="12" height="12" viewBox="0 0 24 24"><path d="M12 1.200l9.200 5.300v11L12 22.800 2.800 17.500v-11z" fill="#ffffff" stroke="#ffffff" stroke-width="1.600" stroke-linejoin="round"/><path d="M8.600 6L15.200 10.300L8.600 13.500L14.800 18" fill="none" stroke="#007acc" stroke-width="2.700" stroke-linejoin="miter"/></svg><svg class="abs" style="left:1196.0px;top:3.6px" width="10" height="12" viewBox="0 0 10 12" fill="none" stroke="#ffffff" stroke-width="1" stroke-linecap="round" stroke-linejoin="round"><path d="M5 1.500C2.800 1.500 2 3.200 2 5V8L1 9.500H9L8 8V5C8 3.200 7.200 1.500 5 1.500ZM4 10.500H6"/></svg></div>
<div id="wm" class="abs">掘金技术社区 @ 左诗右码</div>
</body>
</html>
